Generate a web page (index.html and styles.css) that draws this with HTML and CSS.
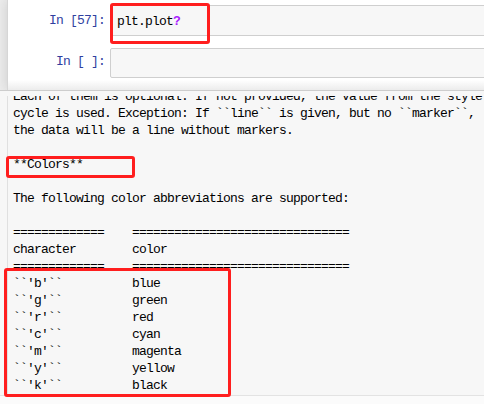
FILE: index.html
```html
<!DOCTYPE html>
<html>
<head>
<meta charset="utf-8">
<link rel="stylesheet" href="styles.css">
</head>
<body>
<div class="notebook">
  <div class="cell">
    <div class="prompt">In [57]:</div>
    <div class="input">plt.plot<span class="op">?</span></div>
  </div>
  <div class="cell">
    <div class="prompt prompt-empty">In [ ]:</div>
    <div class="input input-empty"></div>
  </div>
</div>
<div class="pager">
  <div class="pager-body">
<pre class="pager-text">Each of them is optional. If not provided, the value from the style
cycle is used. Exception: If ``line`` is given, but no ``marker``,
the data will be a line without markers.

**Colors**

The following color abbreviations are supported:

=============    ===============================
character        color
=============    ===============================
``'b'``          blue
``'g'``          green
``'r'``          red
``'c'``          cyan
``'m'``          magenta
``'y'``          yellow
``'k'``          black</pre>
  </div>
</div>
<div class="footer"></div>
<div class="mark mark-code"></div>
<div class="mark mark-colors"></div>
<div class="mark mark-table"></div>
</body>
</html>
```
FILE: styles.css
```css
html, body {
  margin: 0;
  padding: 0;
}
body {
  width: 484px;
  height: 404px;
  overflow: hidden;
  position: relative;
  background: #eeeeee;
  font-family: "Liberation Mono", "DejaVu Sans Mono", monospace;
}
.notebook {
  margin-left: 7px;
  height: 90px;
  box-sizing: border-box;
  padding-top: 5px;
  border-left: 1px solid #d6d6d6;
  background: linear-gradient(to bottom, #ffffff 0, #ffffff 80px, #ececec 90px);
  box-shadow: 0 0 12px 1px rgba(87, 87, 87, 0.2);
  overflow: hidden;
}
.cell {
  display: flex;
  align-items: flex-start;
  margin-right: -20px;
}
.cell + .cell {
  margin-top: 12px;
}
.prompt {
  width: 97px;
  padding: 7px 5px 0 0;
  text-align: right;
  color: #303f9f;
  font-size: 13px;
  line-height: 17px;
  letter-spacing: -0.8px;
  white-space: pre;
}
.prompt-empty {
  padding-top: 5px;
}
.input {
  flex: 1;
  background: #f7f7f7;
  border: 1px solid #cfcfcf;
  border-radius: 2px;
  padding: 7px 6px 5px;
  font-size: 13px;
  line-height: 17px;
  letter-spacing: -0.8px;
  color: #000;
  white-space: pre;
}
.input-empty {
  height: 17px;
  padding: 5px 6px 6px;
}
.op {
  color: #aa22ff;
  font-weight: bold;
}
.pager {
  height: 304px;
  box-sizing: content-box;
  border-top: 1px solid #cdcdcd;
  border-bottom: 1px solid #e3e3e3;
  background: #f7f7f7;
  overflow: hidden;
}
.pager-body {
  margin: 5px 0 0 7px;
  height: 299px;
  overflow: hidden;
  border-left: 1px solid #e0e0e0;
  padding-left: 5px;
}
.pager-text {
  margin: -8px 0 0;
  font-family: "Liberation Mono", "DejaVu Sans Mono", monospace;
  font-size: 13px;
  line-height: 17px;
  letter-spacing: -0.8px;
  white-space: pre;
  color: #000;
}
.footer {
  height: 8px;
  background: #fbfbfb;
}
.mark {
  position: absolute;
  box-sizing: border-box;
  border: 3px solid #ff1e1e;
  border-radius: 3px;
}
.mark-code {
  left: 110px;
  top: 3px;
  width: 100px;
  height: 41px;
}
.mark-colors {
  left: 6px;
  top: 156px;
  width: 129px;
  height: 22px;
}
.mark-table {
  left: 4px;
  top: 268px;
  width: 227px;
  height: 129px;
}
```
